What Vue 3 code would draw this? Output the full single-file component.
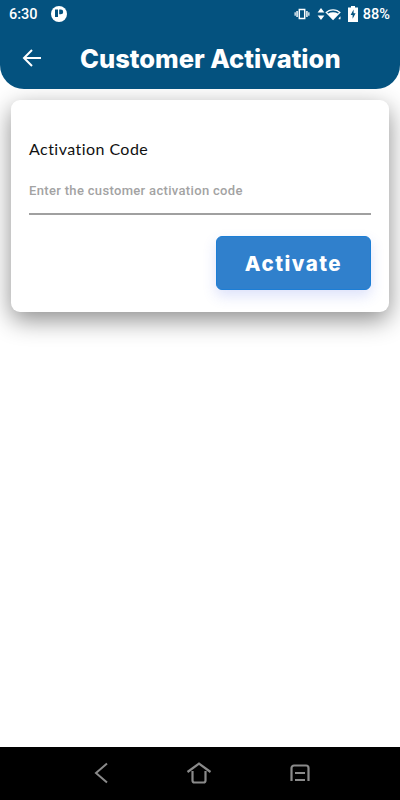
<script setup>
const title = 'Customer Activation'
</script>

<template>
  <div class="screen">
    <header class="appbar">
      <div class="status">
        <span class="time">6:30</span>
        <svg class="notif" width="18" height="18" viewBox="0 0 18 18">
          <circle cx="9" cy="9" r="8" fill="#fff" />
          <rect x="5" y="4.5" width="3" height="7.5" fill="#04527f" />
          <path d="M9.2 4.5h1.6a2.4 2.4 0 0 1 0 4.8H9.2z" fill="#04527f" />
        </svg>
        <div class="status-right">
          <svg width="16" height="12" viewBox="0 0 18 14" fill="#fff">
            <path d="M5 1h8v12H5zM6.700 2.700v8.600h4.600V2.700z" fill-rule="evenodd" />
            <rect x="2.400" y="3.500" width="1.700" height="7" />
            <rect x="13.900" y="3.500" width="1.700" height="7" />
            <rect x="0.300" y="5" width="1.400" height="4" />
            <rect x="16.300" y="5" width="1.400" height="4" />
          </svg>
          <svg class="arrows" width="8" height="14" viewBox="0 0 8 14" fill="#fff">
            <path d="M4 1l3.400 4.600H.6zM4 13L.6 8.400h6.800z" />
          </svg>
          <svg class="wifi" width="17" height="13" viewBox="0 0 19 14">
            <path d="M.3 4.600C2.500 2.400 5.600 1 9 1s6.500 1.400 8.700 3.600L9 13.500z" fill="#fff" />
            <path d="M2.500 4.700C4.300 3.300 6.500 2.500 9 2.500s4.700.8 6.500 2.200l-1 1.100C12.900 5 11 4.500 9 4.500S5.100 5 3.500 5.800z" fill="#04527f" />
            <path d="M14.400 14v-3.200l2.400-3h1.400v3.400h.8v1h-.8V14z" fill="#04527f" />
            <path d="M15.300 12.200v-.9l1.700-2.100h.3v3z" fill="#fff" />
          </svg>
          <svg class="battery" width="10" height="16" viewBox="0 0 10 16">
            <path d="M3 0h4v1.500h3V16H0V1.500h3z" fill="#fff" />
            <path d="M5.600 3.500L2.600 9h2v3.800l3-5.600h-2z" fill="#04527f" />
          </svg>
          <span class="pct">88%</span>
        </div>
      </div>
      <div class="titlebar">
        <svg class="back" width="20" height="20" viewBox="0 0 20 20" fill="none" stroke="#fff" stroke-width="2">
          <path d="M19 10H2M10 2l-8 8 8 8" />
        </svg>
        <h1>{{ title }}</h1>
      </div>
    </header>

    <main class="content">
      <section class="card">
        <label class="label">Activation Code</label>
        <div class="input">Enter the customer activation code</div>
        <div class="actions">
          <button class="activate">Activate</button>
        </div>
      </section>
    </main>

    <nav class="navbar">
      <svg width="14" height="22" viewBox="0 0 14 22" fill="none" stroke="#8a8a8a" stroke-width="2">
        <path d="M13 1.500L2 11l11 9.500" />
      </svg>
      <svg width="26" height="22" viewBox="-1 0 26 22" fill="none" stroke="#8a8a8a" stroke-width="2.200">
        <path d="M.5 10L12 1.500 23.500 10M5.500 9v9.500a2 2 0 0 0 2 2h9a2 2 0 0 0 2-2V9" />
      </svg>
      <svg width="20" height="18" viewBox="0 0 20 18" fill="none" stroke="#8a8a8a" stroke-width="2.200">
        <path d="M1.500 17V4a2.500 2.500 0 0 1 2.500-2.500h12A2.500 2.500 0 0 1 18.500 4v13M5 9h10M5 16h10" />
      </svg>
    </nav>
  </div>
</template>

<style>
html, body {
  margin: 0;
  background: #fff;
}
</style>

<style scoped>
.screen {
  width: 400px;
  height: 800px;
  display: flex;
  flex-direction: column;
  overflow: hidden;
  background: #fff;
  font-family: Roboto, sans-serif;
}
.appbar {
  position: relative;
  z-index: 1;
  height: 89px;
  flex: none;
  box-sizing: border-box;
  background: #04527f;
  border-radius: 0 0 24px 24px;
  color: #fff;
}
.status {
  height: 28px;
  display: flex;
  align-items: center;
  padding: 0 10px 0 9px;
}
.time {
  font-size: 14.5px;
  font-weight: 500;
}
.notif {
  margin-left: 12px;
}
.status-right {
  margin-left: auto;
  display: flex;
  align-items: center;
}
.arrows {
  margin-left: 7px;
}
.battery {
  margin-left: 6px;
}
.pct {
  margin-left: 5px;
  font-size: 14.5px;
  font-weight: 500;
}
.titlebar {
  display: flex;
  align-items: center;
  height: 60px;
  padding-left: 22px;
}
.titlebar h1 {
  margin: 0 0 0 38px;
  font-family: Inter, sans-serif;
  font-size: 25.5px;
  font-weight: 800;
  color: #fff;
  white-space: nowrap;
}
.content {
  flex: 1;
  padding: 11px 11px 0;
}
.card {
  height: 212px;
  box-sizing: border-box;
  padding: 39px 18px 0;
  background: #fff;
  border-radius: 9px;
  box-shadow: 0 8px 24px rgba(0, 0, 0, 0.45);
}
.label {
  display: block;
  font-family: Lato, sans-serif;
  font-size: 16px;
  letter-spacing: 0.45px;
  line-height: 20px;
  color: #111;
}
.input {
  margin-top: 21px;
  height: 33px;
  line-height: 22px;
  border-bottom: 2px solid #a0a0a0;
  font-size: 13px;
  font-weight: 500;
  letter-spacing: 0.33px;
  color: #a3a3a3;
}
.actions {
  display: flex;
  justify-content: flex-end;
  margin-top: 21px;
}
.activate {
  width: 155px;
  height: 54px;
  border: 1px solid #1c7ed6;
  border-radius: 6px;
  background: #3080cc;
  color: #fff;
  font-family: Inter, sans-serif;
  font-size: 20.5px;
  font-weight: 800;
  letter-spacing: 1.5px;
  box-shadow: 0 6px 14px rgba(60, 90, 230, 0.18);
}
.navbar {
  height: 53px;
  flex: none;
  background: #000;
  display: flex;
  align-items: center;
  justify-content: center;
  gap: 78px;
  padding: 0 0 1px 4px;
  box-sizing: border-box;
}
</style>
